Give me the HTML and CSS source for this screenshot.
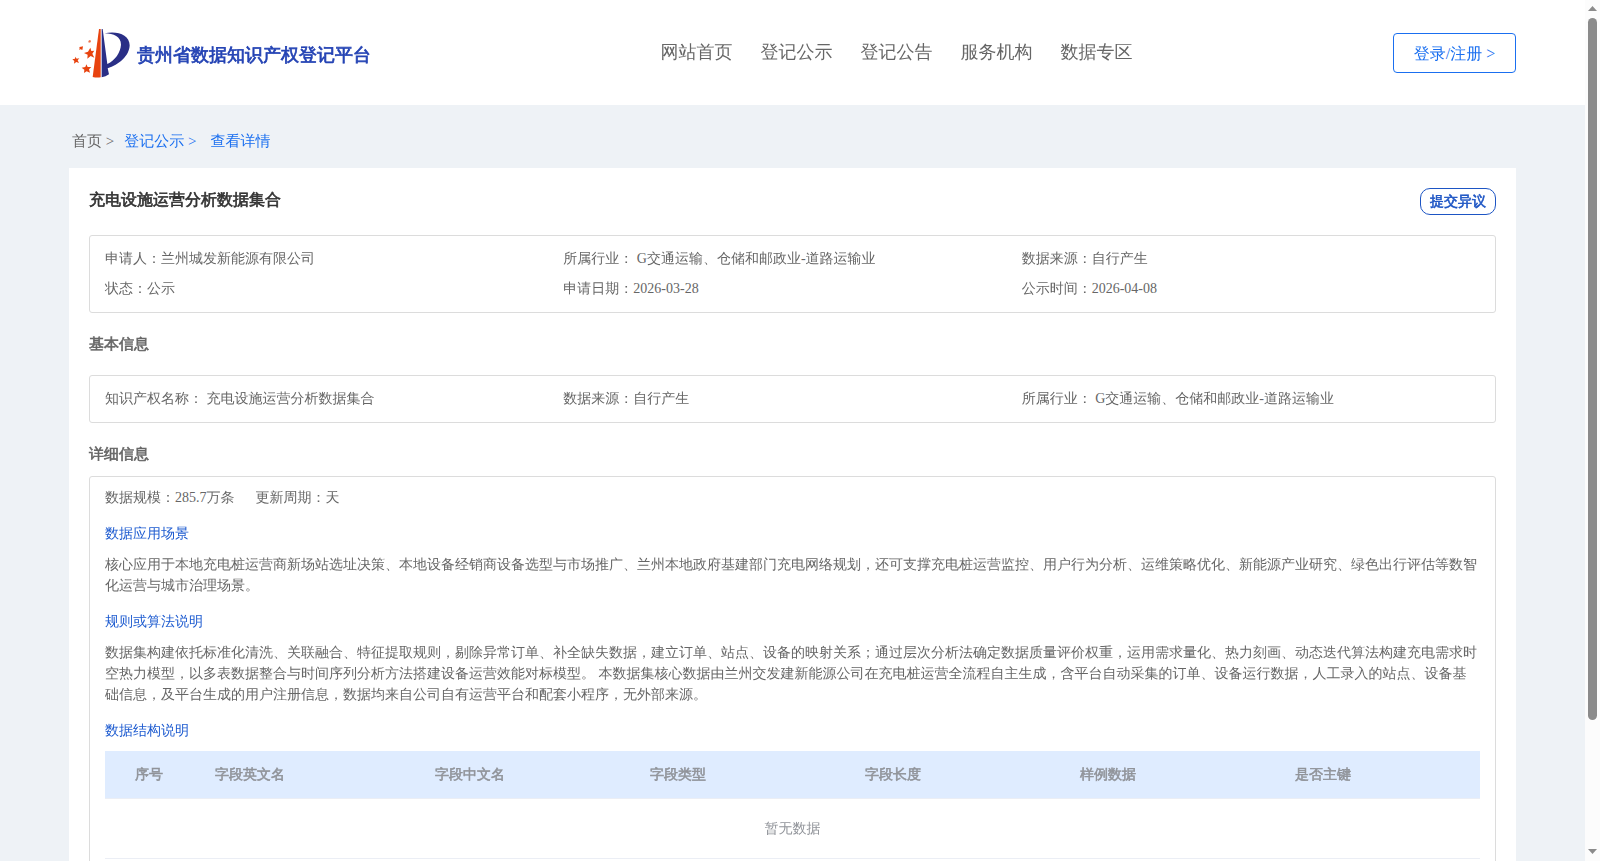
FILE: index.html
```html
<!DOCTYPE html>
<html lang="zh-CN">
<head>
<meta charset="utf-8">
<meta name="viewport" content="width=device-width, initial-scale=1">
<title>贵州省数据知识产权登记平台</title>
<link rel="stylesheet" href="styles.css">
</head>
<body>
<div class="page">
  <header class="header">
    <div class="brand">
      <svg class="brand-logo" viewBox="36 38 177 150" aria-hidden="true">
        <path fill="#e8430f" d="M117 41h5v145q-12 2-24-1z"/>
        <path fill="#2a2f86" d="M125 41h3l14 105C166 134 181 112 183 88C183 64 161 54 134 54C170 45 209 58 209 90C208 122 176 149 143 159L147 177Q137 184 125 186z"/>
        <g fill="#e8430f">
          <path d="M91 97l3 10 9-1-6 9 6 12-11-5-10 8 1-12-11-5 12-4z"/>
          <path d="M46 124l4 6 8-1-5 6 4 8-8-3-7 5 1-8-6-5 8-2z"/>
          <path d="M79 147l4 8 11 0-7 7 3 10-10-4-8 5 1-10-8-6 11-2z"/>
          <path d="M58 95l5-1 6-1-1 6-1 5-5-2-5 1 2-4z"/>
          <path d="M85 77l4-3 4 2-1 5-6 1z" opacity=".75"/>
        </g>
      </svg>
      <span class="brand-name">贵州省数据知识产权登记平台</span>
    </div>
    <nav class="nav">
      <a href="#">网站首页</a>
      <a href="#">登记公示</a>
      <a href="#">登记公告</a>
      <a href="#">服务机构</a>
      <a href="#">数据专区</a>
    </nav>
    <button class="login" type="button">登录/注册 &gt;</button>
  </header>

  <main class="main">
    <nav class="crumbs">
      <a class="crumb-home" href="#">首页 &gt;</a>
      <a class="crumb-parent" href="#">登记公示 &gt;</a>
      <a href="#">查看详情</a>
    </nav>

    <article class="card">
      <div class="card-head">
        <h1 class="title">充电设施运营分析数据集合</h1>
        <button class="objection" type="button">提交异议</button>
      </div>

      <div class="box facts">
        <span>申请人：兰州城发新能源有限公司</span>
        <span>所属行业： G交通运输、仓储和邮政业-道路运输业</span>
        <span>数据来源：自行产生</span>
        <span>状态：公示</span>
        <span>申请日期：2026-03-28</span>
        <span>公示时间：2026-04-08</span>
      </div>

      <h2 class="section section-basic">基本信息</h2>
      <div class="box facts">
        <span>知识产权名称： 充电设施运营分析数据集合</span>
        <span>数据来源：自行产生</span>
        <span>所属行业： G交通运输、仓储和邮政业-道路运输业</span>
      </div>

      <h2 class="section section-detail">详细信息</h2>
      <div class="box detail">
        <div class="scale">
          <span>数据规模：285.7万条</span>
          <span>更新周期：天</span>
        </div>
        <h3 class="sub">数据应用场景</h3>
        <p class="text">核心应用于本地充电桩运营商新场站选址决策、本地设备经销商设备选型与市场推广、兰州本地政府基建部门充电网络规划，还可支撑充电桩运营监控、用户行为分析、运维策略优化、新能源产业研究、绿色出行评估等数智化运营与城市治理场景。</p>
        <h3 class="sub">规则或算法说明</h3>
        <p class="text">数据集构建依托标准化清洗、关联融合、特征提取规则，剔除异常订单、补全缺失数据，建立订单、站点、设备的映射关系；通过层次分析法确定数据质量评价权重，运用需求量化、热力刻画、动态迭代算法构建充电需求时空热力模型，以多表数据整合与时间序列分析方法搭建设备运营效能对标模型。 本数据集核心数据由兰州交发建新能源公司在充电桩运营全流程自主生成，含平台自动采集的订单、设备运行数据，人工录入的站点、设备基础信息，及平台生成的用户注册信息，数据均来自公司自有运营平台和配套小程序，无外部来源。</p>
        <h3 class="sub">数据结构说明</h3>
        <table class="fields">
          <thead>
            <tr>
              <th class="col-index">序号</th>
              <th class="col-name">字段英文名</th>
              <th>字段中文名</th>
              <th>字段类型</th>
              <th>字段长度</th>
              <th>样例数据</th>
              <th class="col-key">是否主键</th>
            </tr>
          </thead>
          <tbody>
            <tr><td class="empty" colspan="7">暂无数据</td></tr>
          </tbody>
        </table>
      </div>
    </article>
  </main>
</div>
<div class="scrollbar" aria-hidden="true">
  <svg class="arrow" viewBox="0 0 9 5"><path d="M0 5L4.5 0L9 5z"/></svg>
  <div class="track"><div class="thumb"></div></div>
  <svg class="arrow" viewBox="0 0 9 5"><path d="M0 0L4.5 5L9 0z"/></svg>
</div>
</body>
</html>
```
FILE: styles.css
```css
* {
  box-sizing: border-box;
}

body {
  margin: 0;
  height: 100vh;
  display: flex;
  overflow: hidden;
  background: #eef2f6;
  color: #666;
  font-family: "Liberation Serif", "WenQuanYi Zen Hei", "Droid Sans Fallback", "Noto Sans CJK SC", serif;
  font-size: 14px;
  line-height: 21px;
}

a {
  color: inherit;
  text-decoration: none;
}

button {
  font-family: inherit;
  background: #fff;
  cursor: pointer;
}

h1,
h2,
h3,
p {
  margin: 0;
}

.brand-name,
.title,
.section,
.objection,
.fields th {
  font-weight: bold;
  -webkit-text-stroke: 0.04em currentColor;
}

.page {
  flex: 1;
  min-width: 0;
  overflow: hidden;
}

.header {
  display: flex;
  align-items: center;
  justify-content: space-between;
  height: 105px;
  padding: 0 69px 0 72px;
  background: #fff;
}

.brand {
  display: flex;
  align-items: center;
  gap: 6px;
  margin-right: 29px;
}

.brand-logo {
  width: 59px;
  height: 50px;
}

.brand-name {
  padding-top: 5px;
  color: #2443b4;
  font-size: 18px;
}

.nav {
  display: flex;
  gap: 28px;
  font-size: 18px;
}

.login {
  width: 123px;
  height: 40px;
  padding: 3px 0 0;
  border: 1px solid #1a6ff0;
  border-radius: 4px;
  color: #1a6ff0;
  font-size: 16px;
}

.main {
  padding: 0 69px;
}

.crumbs {
  display: flex;
  height: 63px;
  padding: 26px 3px 0;
  color: #1a6ff0;
  font-size: 15px;
}

.crumb-home {
  margin-right: 10px;
  color: #666;
}

.crumb-parent {
  margin-right: 14px;
}

.card {
  padding: 20px;
  background: #fff;
}

.card-head {
  display: flex;
  align-items: flex-start;
  justify-content: space-between;
  height: 47px;
}

.title {
  color: #333;
  font-size: 16px;
  line-height: 24px;
}

.objection {
  width: 76px;
  height: 27px;
  padding: 0;
  border: 1px solid #1d55c4;
  border-radius: 10px;
  color: #1d55c4;
  font-size: 14px;
}

.box {
  border: 1px solid #dcdcdc;
  border-radius: 3px;
}

.facts {
  display: grid;
  grid-template-columns: repeat(3, 1fr);
  padding: 8px 15px;
  line-height: 30px;
}

.section {
  font-size: 15px;
  line-height: 22px;
}

.section-basic {
  padding: 20px 0;
}

.section-detail {
  padding: 20px 0 11px;
}

.detail {
  padding: 10px 15px 20px;
}

.scale {
  display: flex;
  gap: 21px;
}

.sub {
  padding: 15px 0 10px;
  color: #1d5bd0;
  font-size: 14px;
  font-weight: normal;
}

.fields {
  width: 100%;
  table-layout: fixed;
  border-collapse: separate;
  border-spacing: 0;
  color: #909399;
}

.fields th {
  height: 48px;
  padding: 0 10px;
  border-bottom: 1px solid #ebeef5;
  background: #dfecff;
  background-clip: padding-box;
  text-align: left;
}

.fields .col-index {
  width: 100px;
  padding-left: 30px;
}

.fields .col-name {
  width: 16%;
}

.fields .col-key {
  width: 195px;
}

.empty {
  height: 60px;
  padding: 0;
  border-bottom: 1px solid #ebeef5;
  text-align: center;
}

.scrollbar {
  display: flex;
  flex-direction: column;
  align-items: center;
  width: 15px;
  padding: 6px 0 7px;
  background: #fcfcfc;
}

.arrow {
  width: 9px;
  height: 5px;
  fill: #8b8b8b;
}

.track {
  flex: 1;
  padding: 7px 0 5px;
}

.thumb {
  width: 9px;
  height: 85%;
  border-radius: 5px;
  background: #8b8b8b;
}
```
